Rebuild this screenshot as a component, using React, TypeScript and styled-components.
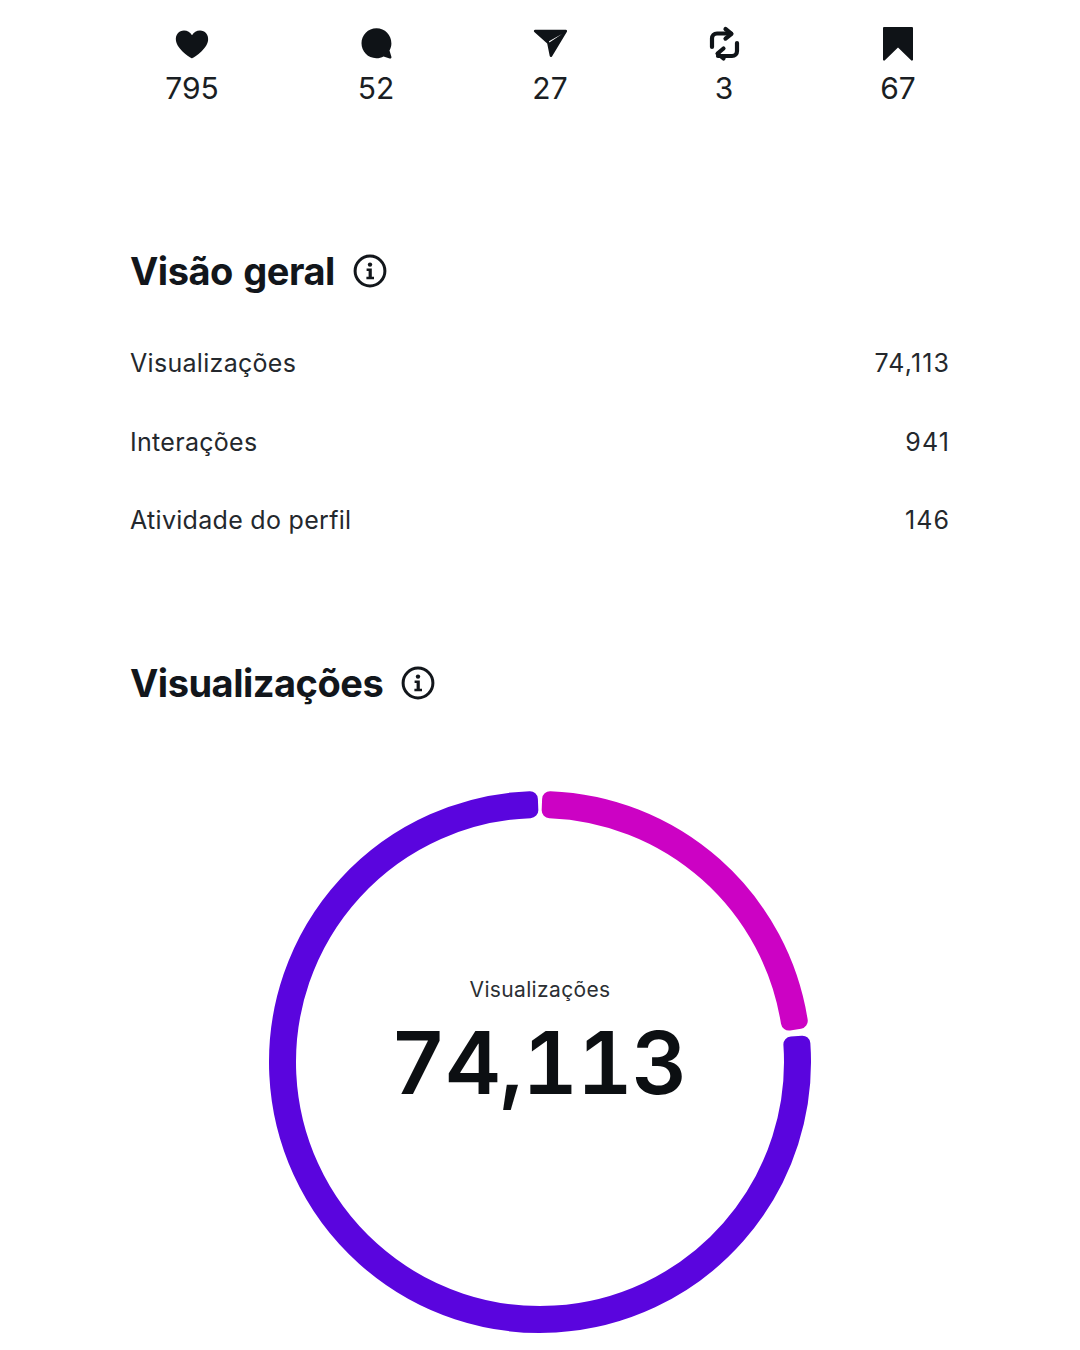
import React from "react";
import styled, { createGlobalStyle } from "styled-components";

const Global = createGlobalStyle`
  html, body { margin: 0; padding: 0; background: #fff; }
  body { font-family: Inter, "Liberation Sans", sans-serif; color: #12161b; }
`;

const Page = styled.div`
  width: 1080px;
  height: 1350px;
  box-sizing: border-box;
  overflow: hidden;
  padding: 26px 130px 0;
`;

const StatsRow = styled.div`
  display: flex;
  gap: 114px;
  padding-left: 32px;
`;

const Stat = styled.div<{ $extra?: number }>`
  width: 60px;
  margin-right: ${(p) => p.$extra ?? 0}px;
  display: flex;
  flex-direction: column;
  align-items: center;
`;

const StatIcon = styled.svg`
  width: 36px;
  height: 36px;
  display: block;
  color: #0f1317;
`;

const StatValue = styled.span`
  margin-top: 8px;
  font-size: 30px;
  line-height: 36px;
  color: #1a1e23;
`;

const Heading = styled.h2<{ $top: number }>`
  display: flex;
  align-items: center;
  gap: 18px;
  margin: ${(p) => p.$top}px 0 0;
  font-size: 38px;
  line-height: 46px;
  font-weight: 700;
  letter-spacing: -0.5px;
  word-spacing: 2px;
  color: #12161b;
`;

const InfoIcon = styled.svg`
  width: 34px;
  height: 34px;
  display: block;
  color: #12161b;
`;

const Rows = styled.div`
  display: flex;
  flex-direction: column;
  gap: 48.5px;
  margin-top: 54px;
`;

const Row = styled.div`
  display: flex;
  justify-content: space-between;
  font-size: 25px;
  line-height: 30px;
  letter-spacing: 0.3px;
  color: #24282d;
`;

const RowValue = styled.span`
  letter-spacing: 1.1px;
`;

const ChartWrap = styled.div`
  position: relative;
  width: 544px;
  height: 544px;
  margin: 84px auto 0;
`;

const Ring = styled.svg`
  width: 544px;
  height: 544px;
  display: block;
`;

const Center = styled.div`
  position: absolute;
  inset: 0;
  display: flex;
  flex-direction: column;
  align-items: center;
  justify-content: center;
`;

const CenterLabel = styled.span`
  font-size: 21px;
  line-height: 26px;
  letter-spacing: 0.35px;
  color: #2b2f33;
`;

const CenterValue = styled.span`
  margin: 10px 3px 35px 0;
  font-size: 86px;
  line-height: 100px;
  font-weight: 600;
  letter-spacing: -0.9px;
  font-feature-settings: "tnum";
  color: #0c0f12;
`;

const polar = (r: number, deg: number, c = 272) => {
  const a = ((deg - 90) * Math.PI) / 180;
  return `${(c + r * Math.cos(a)).toFixed(2)} ${(c + r * Math.sin(a)).toFixed(2)}`;
};

const sector = (from: number, to: number) => {
  const outer = 263;
  const inner = 252;
  const large = to - from > 180 ? 1 : 0;
  return `M${polar(outer, from)} A${outer} ${outer} 0 ${large} 1 ${polar(outer, to)} L${polar(inner, to)} A${inner} ${inner} 0 ${large} 0 ${polar(inner, from)} Z`;
};

const Info = () => (
  <InfoIcon viewBox="0 0 34 34">
    <circle cx="17" cy="17" r="14.9" fill="none" stroke="currentColor" strokeWidth="3" />
    <circle cx="17" cy="10.6" r="2.2" fill="currentColor" />
    <path d="M13.6 14.6h5.2v8.2h2.2v2.4h-7.6v-2.4h2.2v-5.8h-2z" fill="currentColor" />
  </InfoIcon>
);

const stats = [
  {
    value: "795",
    extra: 10,
    icon: (
      <path d="M18 32.200C16.900 32.200 3 23.600 1.900 14.200 1.300 8.800 5 4.600 10 4.600c3.400 0 6.300 1.700 8 4.600 1.700-2.900 4.600-4.600 8-4.600 5 0 8.700 4.200 8.100 9.600C33 23.600 19.100 32.200 18 32.200z" fill="currentColor" />
    ),
  },
  {
    value: "52",
    icon: (
      <path d="M18.500 2.300C10 2.300 3.500 9.100 3.500 17.300 3.500 25.600 10 32.200 18.300 32.200c2.900 0 5.300-.8 7.200-1.800l6.200 2c1.200.3 2-.5 1.700-1.700l-1.900-6.300c1-2 1.900-4.200 1.900-7C33.400 9.100 27 2.300 18.500 2.300z" fill="currentColor" />
    ),
  },
  {
    value: "27",
    icon: (
      <path fillRule="evenodd" d="M3.200 3.800h30.600c1.100 0 1.700 1.100 1.100 2L20 30.400c-.7 1.100-2 .9-2.300-.4L15.200 17.500 2.300 6C1.400 5.100 2 3.800 3.200 3.800zM30 8L17 15.300l.4 1.300z" fill="currentColor" />
    ),
  },
  {
    value: "3",
    icon: (
      <g fill="none" stroke="currentColor" strokeWidth="4.200" strokeLinecap="round" strokeLinejoin="round">
        <path d="M6 21v-8.500c0-3 2-5 5-5h14" />
        <path d="M19.500 3l6 4.800-6 4.800" />
        <path d="M31 17v8c0 3-2 5-5 5H12" />
        <path d="M17.500 22.500l-6 5 6 5" />
      </g>
    ),
  },
  {
    value: "67",
    icon: (
      <path d="M4.200 1h27.600c.7 0 1.200.5 1.200 1.200v31.300c0 1-1.100 1.500-1.900.8L18 21.500 4.900 34.300c-.8.700-1.900.2-1.900-.8V2.200C3 1.500 3.500 1 4.200 1z" fill="currentColor" />
    ),
  },
];

const rows = [
  ["Visualizações", "74,113"],
  ["Interações", "941"],
  ["Atividade do perfil", "146"],
];

export default function App() {
  return (
    <Page>
      <Global />
      <StatsRow>
        {stats.map((s) => (
          <Stat key={s.value} $extra={s.extra}>
            <StatIcon viewBox="0 0 36 36">{s.icon}</StatIcon>
            <StatValue>{s.value}</StatValue>
          </Stat>
        ))}
      </StatsRow>
      <Heading $top={142}>
        Visão geral <Info />
      </Heading>
      <Rows>
        {rows.map(([label, value]) => (
          <Row key={label}>
            <span>{label}</span>
            <RowValue>{value}</RowValue>
          </Row>
        ))}
      </Rows>
      <Heading $top={125}>
        Visualizações <Info />
      </Heading>
      <ChartWrap>
        <Ring viewBox="0 0 544 544">
          <g strokeWidth="16" strokeLinejoin="round">
            <path d={sector(2.2, 81)} fill="#cc02c4" stroke="#cc02c4" />
            <path d={sector(86, 357.8)} fill="#5a05de" stroke="#5a05de" />
          </g>
        </Ring>
        <Center>
          <CenterLabel>Visualizações</CenterLabel>
          <CenterValue>74,113</CenterValue>
        </Center>
      </ChartWrap>
    </Page>
  );
}
